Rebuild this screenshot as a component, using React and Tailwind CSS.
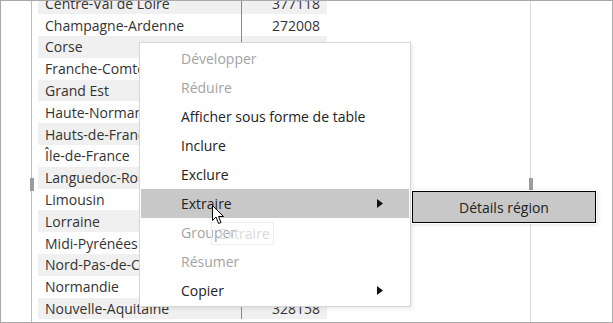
import React from "react";

// values under the context menu are hidden in the screenshot, so they stay empty
const rows = [
    ["Centre-Val de Loire", "377118"],
    ["Champagne-Ardenne", "272008"],
    ["Corse", ""],
    ["Franche-Comté", ""],
    ["Grand Est", ""],
    ["Haute-Normandie", ""],
    ["Hauts-de-France", ""],
    ["Île-de-France", ""],
    ["Languedoc-Roussillon", ""],
    ["Limousin", ""],
    ["Lorraine", ""],
    ["Midi-Pyrénées", ""],
    ["Nord-Pas-de-Calais", ""],
    ["Normandie", ""],
    ["Nouvelle-Aquitaine", "328158"],
];

const menu = [
    { label: "Développer", disabled: true },
    { label: "Réduire", disabled: true },
    { label: "Afficher sous forme de table" },
    { label: "Inclure" },
    { label: "Exclure" },
    { label: "Extraire", active: true, sub: true },
    { label: "Grouper", disabled: true },
    { label: "Résumer", disabled: true },
    { label: "Copier", sub: true },
];

function Caret() {
    return (
        <svg width="6" height="9" viewBox="0 0 6 9">
            <path d="M0 0 L6 4.5 L0 9 Z" fill="#111" />
        </svg>
    );
}

function Pointer() {
    return (
        <svg width="13" height="20" viewBox="0 0 13 20">
            <path
                d="M0.5 0.5 L0.5 15.5 L4 12 L6.5 18.5 L9 17.5 L6.5 11.5 L11.5 11.5 Z"
                fill="#fff"
                stroke="#000"
                strokeWidth="1"
                strokeLinejoin="round"
            />
        </svg>
    );
}

export default function App() {
    return (
        <div
            className="relative w-[613px] h-[323px] overflow-hidden bg-white border border-[#a9a9a9] text-[14px] text-[#333]"
            style={{ fontFamily: '"Open Sans", "Noto Sans", sans-serif' }}
        >
            <div className="flex h-full">
                {/* left gutter */}
                <div className="w-[30px] shrink-0" />

                {/* visual container */}
                <div className="relative w-[500px] shrink-0 h-full border-l border-r border-l-[#bdbdbd] border-r-[#dadada]">
                    <div className="ml-[6px] mt-[-8.5px] w-[289px]">
                        {rows.map(([name, value], i) => (
                            <div
                                key={name}
                                className={`flex h-[21.8px] ${i % 2 === 0 ? "bg-[#f0f0f0]" : "bg-white"}`}
                            >
                                <div className="w-[203px] pl-[7px] flex items-center whitespace-nowrap overflow-hidden">
                                    {name}
                                </div>
                                <div className="flex-1 flex items-center justify-end pr-[7px] border-l border-[#2bb5a4]">
                                    {value}
                                </div>
                            </div>
                        ))}
                    </div>

                    {/* resize handles */}
                    <div className="absolute left-[-2px] top-[177px] w-[4px] h-[13px] bg-[#9c9c9c]" />
                    <div className="absolute right-[-3px] top-[177px] w-[4px] h-[12px] bg-[#9c9c9c]" />
                </div>

                <div className="flex-1" />
            </div>

            {/* context menu */}
            <div className="absolute left-[138px] top-[41px] w-[272px] bg-white border border-[#d6d6d6] p-[1px] shadow-[2px_2px_4px_rgba(0,0,0,0.08)]">
                {menu.map((m) => (
                    <div
                        key={m.label}
                        className={`h-[29px] flex items-center justify-between pl-[40px] pr-[26px] ${
                            m.active ? "bg-[#c8c8c8]" : ""
                        } ${m.disabled ? "text-[#a3a3a3]" : "text-[#222]"}`}
                    >
                        <span>{m.label}</span>
                        {m.sub && <Caret />}
                    </div>
                ))}
            </div>

            {/* submenu */}
            <div className="absolute left-[410px] top-[189px] w-[186px] h-[34px] bg-white p-[1px] shadow-[1px_1px_4px_rgba(0,0,0,0.12)]">
                <div className="h-full border border-black bg-[#c8c8c8] flex items-center justify-center text-[#222]">
                    Détails région
                </div>
            </div>

            {/* fading tooltip */}
            <div className="absolute left-[210px] top-[221px] w-[63px] h-[23px] border border-[#eeeeee] flex items-center pl-[7px] text-[#dadada]">
                Extraire
            </div>

            {/* mouse pointer */}
            <div className="absolute left-[211px] top-[204px]">
                <Pointer />
            </div>
        </div>
    );
}
